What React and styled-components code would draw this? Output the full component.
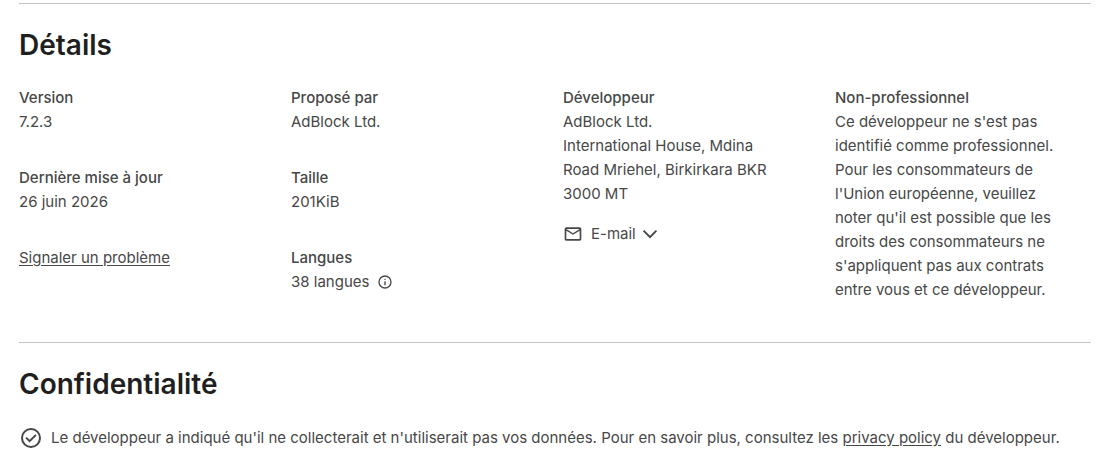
import React from 'react'
import styled, { createGlobalStyle } from 'styled-components';


const GlobalStyle = createGlobalStyle`
  body {
    margin: 0;
    background-color: #fff;
    color: #474747;
    font-family: Inter, Roboto, sans-serif;
    font-size: 15px;
    line-height: 24px;
  }
`
const Container = styled.main`
  padding: 3px 14px 0 19px;
`
const Section = styled.section`
  border-top: 1px solid #c4c4c4;
  padding: 23px 0 40px;
  &:last-child {
    padding-bottom: 16px;
  }
`
const Title = styled.h2`
  margin: 0 0 23px;
  font-size: 28px;
  font-weight: 600;
  line-height: 36px;
  color: #1f1f1f;
`
const Columns = styled.div`
  display: grid;
  grid-template-columns: repeat(4, 1fr);
  column-gap: 16px;
`
const Column = styled.div`
  display: flex;
  flex-direction: column;
  align-items: flex-start;
  gap: ${(props) => props.$gap || 32}px;
  padding-right: 32px;
`
const Label = styled.div`
  font-weight: 500;
`
const Value = styled.div`
  display: flex;
  align-items: center;
  gap: 8px;
`
const Text = styled.p`
  margin: 0;
`
const Link = styled.a`
  color: inherit;
  text-decoration: underline;
  text-underline-offset: 2px;
`
const Button = styled.button`
  display: flex;
  align-items: center;
  gap: 4px;
  padding: 0;
  border: none;
  background: none;
  color: inherit;
  font: inherit;
  cursor: pointer;
`
const MailLabel = styled.span`
  margin-left: 4px;
`
const Notice = styled.div`
  display: flex;
  align-items: center;
  gap: 8px;
  padding-top: 1px;
`
const Icon = styled.svg`
  flex: none;
  width: ${(props) => props.$size}px;
  height: ${(props) => props.$size}px;
  fill: currentColor;
`

const MailIcon = () => (
  <Icon $size={20} viewBox="0 0 24 24" aria-hidden="true">
    <path d="M4 20q-.825 0-1.413-.587Q2 18.825 2 18V6q0-.825.587-1.413Q3.175 4 4 4h16q.825 0 1.413.587Q22 5.175 22 6v12q0 .825-.587 1.413Q20.825 20 20 20ZM20 8l-8 5-8-5v10h16ZM12 11l8-5H4ZM4 8V6v12Z" />
  </Icon>
)

const ChevronIcon = () => (
  <Icon $size={20} viewBox="0 0 20 20" aria-hidden="true">
    <path d="M4.2 6 10 11.8 15.8 6 17.1 7.3 10 14.4 2.9 7.3Z" />
  </Icon>
)

const InfoIcon = () => (
  <Icon $size={16} viewBox="0 0 24 24" aria-hidden="true">
    <path d="M11 17h2v-6h-2Zm1-8q.425 0 .713-.288Q13 8.425 13 8t-.287-.713Q12.425 7 12 7t-.712.287Q11 7.575 11 8t.288.712Q11.575 9 12 9Zm0 13A10 10 0 1 1 12 2a10 10 0 0 1 0 20Zm0-2A8 8 0 1 0 12 4a8 8 0 0 0 0 16Z" />
  </Icon>
)

const CheckIcon = () => (
  <Icon $size={24} viewBox="0 0 24 24" aria-hidden="true">
    <path d="m10.6 16.6 7.05-7.05-1.4-1.4-5.65 5.65-2.85-2.85-1.4 1.4ZM12 22A10 10 0 1 1 12 2a10 10 0 0 1 0 20Zm0-2A8 8 0 1 0 12 4a8 8 0 0 0 0 16Z" />
  </Icon>
)

const Detail = ({ label, children }) => (
  <div>
    <Label>{label}</Label>
    <Value>{children}</Value>
  </div>
)

const App = () => {
  return (
    <>
      <GlobalStyle />
      <Container>
        <Section>
          <Title>Détails</Title>
          <Columns>
            <Column>
              <Detail label="Version">7.2.3</Detail>
              <Detail label="Dernière mise à jour">26 juin 2026</Detail>
              <Link href="#report">Signaler un problème</Link>
            </Column>
            <Column>
              <Detail label="Proposé par">AdBlock Ltd.</Detail>
              <Detail label="Taille">201KiB</Detail>
              <Detail label="Langues">38 langues <InfoIcon /></Detail>
            </Column>
            <Column $gap={16}>
              <div>
                <Label>Développeur</Label>
                <Text>AdBlock Ltd.</Text>
                <Text>International House, Mdina Road Mriehel, Birkirkara BKR 3000 MT</Text>
              </div>
              <Button type="button">
                <MailIcon />
                <MailLabel>E-mail</MailLabel>
                <ChevronIcon />
              </Button>
            </Column>
            <Column>
              <div>
                <Label>Non-professionnel</Label>
                <Text>
                  Ce développeur ne s'est pas identifié comme professionnel. Pour les consommateurs
                  de l'Union européenne, veuillez noter qu'il est possible que les droits des
                  consommateurs ne s'appliquent pas aux contrats entre vous et ce développeur.
                </Text>
              </div>
            </Column>
          </Columns>
        </Section>
        <Section>
          <Title>Confidentialité</Title>
          <Notice>
            <CheckIcon />
            <Text>
              Le développeur a indiqué qu'il ne collecterait et n'utiliserait pas vos données. Pour
              en savoir plus, consultez les <Link href="#privacy">privacy policy</Link> du
              développeur.
            </Text>
          </Notice>
        </Section>
      </Container>
    </>
  )
}

export default App
